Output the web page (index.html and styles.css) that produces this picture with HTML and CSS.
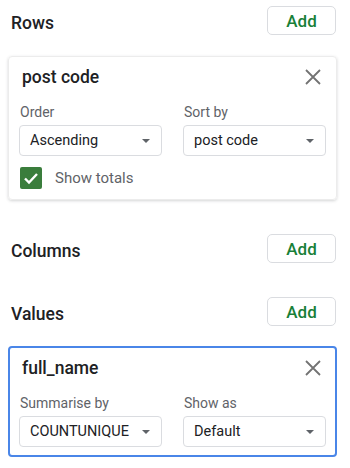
FILE: index.html
```html
<!DOCTYPE html>
<html>

    <head>
        <!-- Meta Data -->
        <meta charset="UTF-8">

        <!-- Title -->
        <title>Pivot table editor</title>

        <!-- Style -->
        <link rel="stylesheet" href="styles.css">
    </head>

    <body>
        <!-- Content -->
        <div class="editor">
            <div class="section">
                <div class="section-header">
                    <h1>Rows</h1>
                    <button class="add-button">Add</button>
                </div>
                <div class="card">
                    <div class="card-title">
                        <h2>post code</h2>
                        <svg class="close" width="16" height="16" viewBox="0 0 16 16">
                            <path d="M1 1L15 15M15 1L1 15" />
                        </svg>
                    </div>
                    <div class="fields">
                        <div class="field">
                            <label>Order</label>
                            <div class="select">Ascending<span class="arrow"></span></div>
                        </div>
                        <div class="field">
                            <label>Sort by</label>
                            <div class="select">post code<span class="arrow"></span></div>
                        </div>
                    </div>
                    <div class="checkbox-row">
                        <span class="checkbox">
                            <svg width="22" height="22" viewBox="0 0 22 22">
                                <path d="M5 11.5L9 15.5L17 7" />
                            </svg>
                        </span>
                        <span class="checkbox-label">Show totals</span>
                    </div>
                </div>
            </div>

            <div class="section">
                <div class="section-header">
                    <h1>Columns</h1>
                    <button class="add-button">Add</button>
                </div>
            </div>

            <div class="section">
                <div class="section-header">
                    <h1>Values</h1>
                    <button class="add-button">Add</button>
                </div>
                <div class="card card-selected">
                    <div class="card-title">
                        <h2>full_name</h2>
                        <svg class="close" width="16" height="16" viewBox="0 0 16 16">
                            <path d="M1 1L15 15M15 1L1 15" />
                        </svg>
                    </div>
                    <div class="fields">
                        <div class="field">
                            <label>Summarise by</label>
                            <div class="select">COUNTUNIQUE<span class="arrow"></span></div>
                        </div>
                        <div class="field">
                            <label>Show as</label>
                            <div class="select">Default<span class="arrow"></span></div>
                        </div>
                    </div>
                </div>
            </div>
        </div>
    </body>

</html>
```

FILE: styles.css
```css
html {
    background-color: #fff;
    color: #202124;
}

body {
    margin: 0;
    font-family: Roboto, "Liberation Sans", sans-serif;
}

.editor {
    padding: 6px 13px 0 8px;
    display: flex;
    flex-direction: column;
    gap: 34px;
}

.section-header {
    display: flex;
    align-items: flex-end;
    justify-content: space-between;
    padding: 0 1px 0 3px;
}

h1 {
    margin: 0 0 2px 0;
    font-size: 17.5px;
    line-height: 20px;
    font-weight: 500;
    color: #202124;
}

.add-button {
    width: 69px;
    height: 29px;
    border: 1px solid #dadce0;
    border-radius: 5px;
    background: #fff;
    color: #188038;
    font-family: inherit;
    font-size: 17px;
    font-weight: 500;
    padding: 0;
}

.card {
    margin-top: 21px;
    border: 1px solid #ececec;
    border-radius: 4px;
    box-shadow: 0 1px 3px rgba(60, 64, 67, 0.22);
    padding: 10px 10px 10px 10px;
}

.card-selected {
    margin-top: 20px;
    border: 2px solid #4a86e8;
    box-shadow: none;
    padding: 10px 9px 8px 9px;
}

.card-title {
    display: flex;
    align-items: center;
    justify-content: space-between;
    height: 20px;
}

h2 {
    margin: 0 0 0 3px;
    font-size: 17.5px;
    line-height: 20px;
    font-weight: 500;
    color: #202124;
}

.close {
    margin-right: 5px;
}

.close path {
    stroke: #737373;
    stroke-width: 1.8;
    fill: none;
}

.fields {
    display: flex;
    gap: 21px;
    margin-top: 17px;
}

.field {
    width: 143px;
    display: flex;
    flex-direction: column;
    gap: 5px;
}

label {
    font-size: 14px;
    line-height: 16px;
    color: #5f6368;
    padding-left: 1px;
}

.select {
    height: 31px;
    box-sizing: border-box;
    border: 1px solid #dadce0;
    border-radius: 4px;
    padding: 0 11px 0 10px;
    display: flex;
    align-items: center;
    justify-content: space-between;
    font-size: 14.5px;
    color: #202124;
}

.arrow {
    width: 0;
    height: 0;
    border-left: 4px solid transparent;
    border-right: 4px solid transparent;
    border-top: 4px solid #5f6368;
}

.checkbox-row {
    display: flex;
    align-items: center;
    gap: 13px;
    margin-top: 11px;
    padding-left: 1px;
}

.checkbox {
    width: 22px;
    height: 22px;
    border-radius: 2px;
    background: #3a7d3c;
    display: block;
}

.checkbox svg {
    display: block;
}

.checkbox path {
    stroke: #fff;
    stroke-width: 2.4;
    fill: none;
}

.checkbox-label {
    font-size: 15px;
    color: #5f6368;
}
```
